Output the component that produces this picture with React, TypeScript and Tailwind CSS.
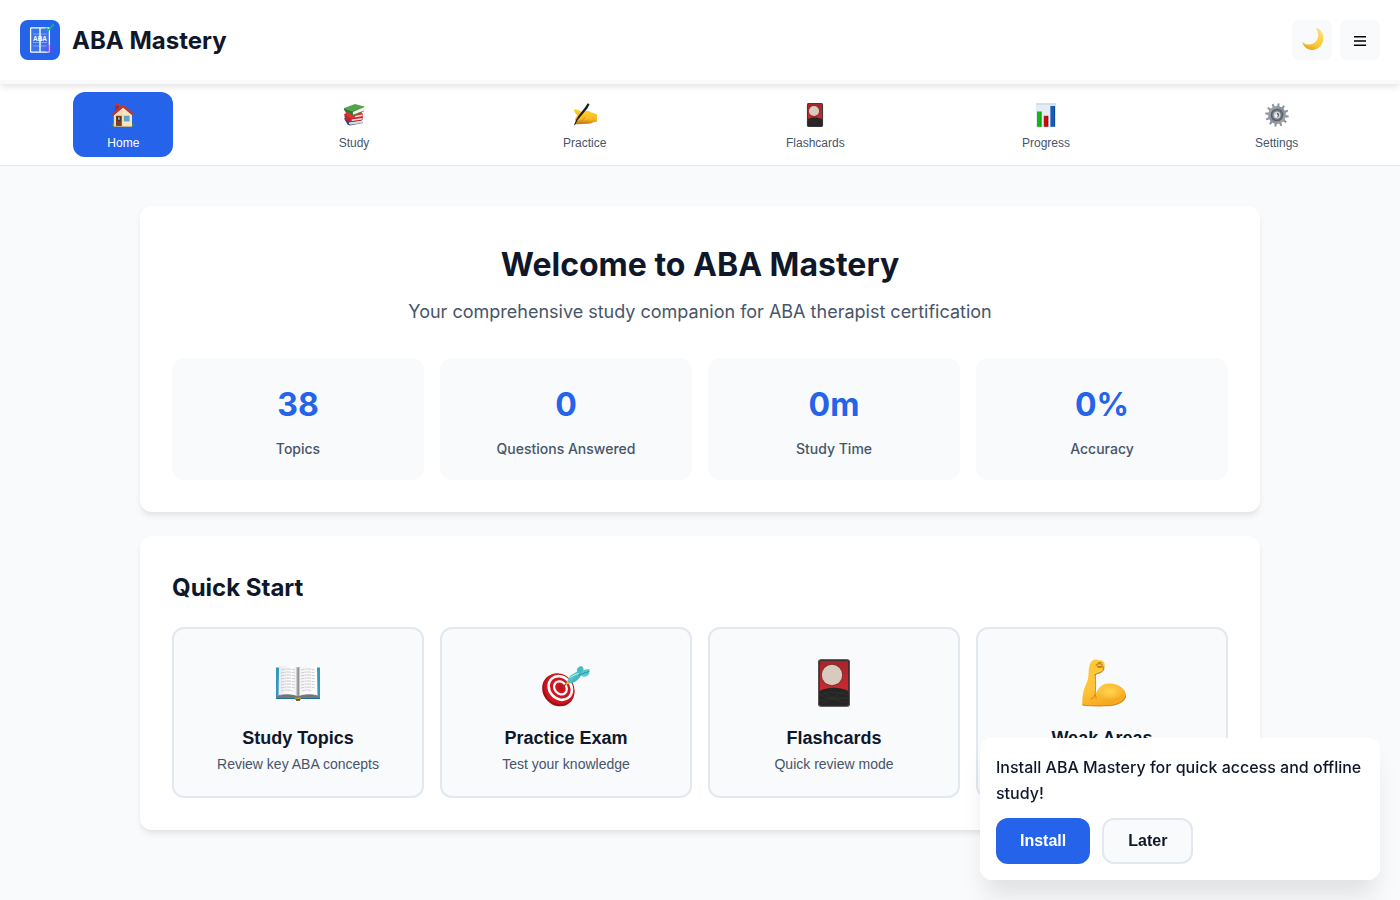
import type { ReactNode } from "react";

type IconProps = { className: string };

function Logo() {
  return (
    <svg viewBox="0 0 40 40" className="size-10 shrink-0 rounded-lg" aria-hidden="true">
      <rect width="40" height="40" fill="#2563eb" />
      <g stroke="#fff" fill="none">
        <rect x="10.6" y="7.8" width="18.8" height="24.4" rx="0.8" strokeWidth="1.3" fill="#fff" fillOpacity="0.1" />
        <path d="M20 8v24" strokeWidth="1.4" />
        <path d="M13 14h14M13 22.5h14M13 26h14" strokeWidth="0.7" opacity="0.5" />
      </g>
      <circle cx="29.5" cy="28.8" r="4" fill="#9333ea" opacity="0.4" />
      <text x="20" y="21.2" textAnchor="middle" fill="#fff" fontSize="6.4" fontWeight="700" fontFamily="Liberation Sans, sans-serif">
        ABA
      </text>
      <path d="M25.8 7.8l2.6 2.8 5.2-6.4" fill="none" stroke="#10b981" strokeWidth="1.6" />
    </svg>
  );
}

function Moon({ className }: IconProps) {
  return (
    <svg viewBox="0 0 24 24" className={className} aria-hidden="true">
      <defs>
        <linearGradient id="moon" x1="0.8" y1="0" x2="0.4" y2="1">
          <stop offset="0" stopColor="#ffe26a" />
          <stop offset="0.7" stopColor="#fbcb35" />
          <stop offset="1" stopColor="#e9a81c" />
        </linearGradient>
      </defs>
      <g transform="translate(1 -1)">
        <path d="M15.500 1C20 2.800 22.800 7 22.400 12C22 18.300 17 23 11 22.900C6.500 22.800 2.600 19.700 1.100 15.200C4 18 8.800 18.700 12.800 16.500C18.300 13.500 19.200 6 15.500 1Z" fill="url(#moon)" />
        <path d="M1.300 15.200C4 18 8.800 18.700 12.800 16.500C18.300 13.500 19.200 6 15.500 1" fill="none" stroke="#e8b84a" strokeWidth="0.500" />
      </g>
    </svg>
  );
}

function House({ className }: IconProps) {
  return (
    <svg viewBox="0 0 24 24" className={className} aria-hidden="true">
      <path d="M0.500 23C0.300 20.500 1.500 20 3 20.300L4 23.500ZM20 20.500C22 19.600 23.600 20.800 23.500 23L20 23.500Z" fill="#468b3c" />
      <rect x="4.200" y="1.500" width="3.600" height="7" fill="#a52c2c" />
      <rect x="3.800" y="0.600" width="4.600" height="1.800" rx="0.400" fill="#c23b35" />
      <path d="M2.800 11.500L12 3L21 11.500V23.500H2.800Z" fill="#f3ddb0" />
      <path d="M12 3L21 11.500V23.500H11.500Z" fill="#f8e6bf" />
      <path d="M12 1.200L22.800 10.600L21.600 12.200L12 4.200L2.300 12.400L1 11Z" fill="#c9352f" />
      <path d="M2.300 12.400L12 4.200L21.600 12.200" fill="none" stroke="#7e2420" strokeWidth="0.600" />
      <rect x="5" y="12.800" width="5.800" height="10.400" fill="#7b4023" />
      <rect x="6" y="13.800" width="3.800" height="4" fill="#4a2c24" />
      <rect x="7" y="14.300" width="1.800" height="2.500" fill="#7ab8d8" />
      <rect x="12.400" y="12.300" width="6.600" height="6.500" fill="#e9cf9a" />
      <rect x="13" y="12.900" width="5.400" height="5.300" fill="#56a5d8" />
      <path d="M15.700 13v5.200M13 15.500h5.400" stroke="#7e9eac" strokeWidth="0.500" />
      <rect x="2.800" y="22.900" width="18.200" height="0.900" fill="#bfae8a" />
    </svg>
  );
}

function Books({ className }: IconProps) {
  return (
    <svg viewBox="0 0 24 24" className={className} aria-hidden="true">
      <path d="M2 15.500L5 14.500L19 17L21 20L8 22.500L5.800 21.800Z" fill="#29428e" />
      <path d="M7 19.300L20 17.500L20.300 20L8.300 21.700C7 21.500 6.500 20 7 19.300Z" fill="#d9dbe0" />
      <path d="M2.200 11L6 9.500L20 12L21 14.500L20.500 17.300L8 19.200L3 16.500Z" fill="#bd2528" />
      <path d="M9.500 16.600L20.300 15V16.600L9.800 18.100Z" fill="#f0ebe8" />
      <path d="M3.200 8L19 8.500L21 11L20.500 14L8.500 15.500L4.600 12.800Z" fill="#dc3630" />
      <path d="M13 13L20.300 11.500V13L13.300 14.300Z" fill="#f5efeb" />
      <path d="M2.200 5L13 1L22.300 3.600L11 8.500Z" fill="#54a44c" />
      <path d="M2.200 5L11 8.500V12.200L3.400 8.500C2 7.700 1.700 6 2.200 5Z" fill="#267d31" />
      <path d="M11.300 8.600L22 4.200C21.400 5.500 21.500 6.800 22 7.800L11.600 11.900C10.500 11 10.600 9.500 11.300 8.600Z" fill="#f4f4ef" />
      <path d="M11 8.500L22.300 3.700M11.300 12.100L22 8" stroke="#267d31" strokeWidth="0.700" />
    </svg>
  );
}

function WritingHand({ className }: IconProps) {
  return (
    <svg viewBox="0 0 24 24" className={className} aria-hidden="true">
      <defs>
        <linearGradient id="hand" x1="0" y1="0" x2="0" y2="1">
          <stop offset="0" stopColor="#ffd12f" />
          <stop offset="0.650" stopColor="#f9ba22" />
          <stop offset="1" stopColor="#ce7c10" />
        </linearGradient>
      </defs>
      <path d="M1.200 6.700C2.500 5.500 5.500 7 7.500 8.200L11 8.700C13 7 16.500 7.800 18 9.200L24 11.200V18.800C20 18.500 19 20.700 15.500 20.700L4 21.200C1.500 21.300 1.800 19.400 3.200 18.700C1 17.200 2.500 14.300 4.500 12.500C3 11 0.500 8.400 1.200 6.700Z" fill="url(#hand)" />
      <path d="M4 19.300L9.500 17.600L11.700 14.500M4.500 20.700L14.500 18.700" fill="none" stroke="#b86f16" strokeWidth="0.600" strokeLinecap="round" />
      <path d="M14.700 0.300L16.500 1.200L14.300 5.600L7.400 13.800L4.600 17L2 22.300L1.100 22L3.300 16.500L5.700 12.600L12.200 4.300Z" fill="#171b20" />
    </svg>
  );
}

function FlowerCard({ className }: IconProps) {
  return (
    <svg viewBox="0 0 48 48" className={className} aria-hidden="true">
      <defs>
        <linearGradient id="card-red" x1="0" y1="0" x2="0" y2="1">
          <stop offset="0" stopColor="#a5262b" />
          <stop offset="1" stopColor="#d02a30" />
        </linearGradient>
        <clipPath id="card-face">
          <rect x="9.500" y="2" width="29" height="44.500" rx="1.500" />
        </clipPath>
      </defs>
      <rect x="8" y="0.200" width="32" height="47.600" rx="3.200" fill="#2b2a2b" />
      <rect x="8.500" y="0.700" width="31" height="46.600" rx="2.800" fill="none" stroke="#6b6563" strokeWidth="0.700" />
      <g clipPath="url(#card-face)">
        <rect x="9.500" y="2" width="29" height="33" fill="url(#card-red)" />
        <circle cx="22" cy="16" r="11" fill="#79302d" />
        <circle cx="22" cy="16" r="10.200" fill="#d8cbbd" />
        <path d="M9 32.500C16 27.600 31 27.600 39 32.500V47H9Z" fill="#252526" />
        <path d="M9 37Q20 30 39 36M9 42Q25 39 34 32M13 32Q26 45 39 43M9 35Q22 43 37 39M12 45Q24 36 39 40" fill="none" stroke="#383838" strokeWidth="0.600" />
      </g>
    </svg>
  );
}

function BarChart({ className }: IconProps) {
  return (
    <svg viewBox="0 0 24 24" className={className} aria-hidden="true">
      <rect x="2" y="0.200" width="20" height="23.600" fill="#d9e4ec" />
      <path d="M2 0.900h20" stroke="#c1ccd5" strokeWidth="0.600" />
      <path d="M2 2h14v20H2z" fill="#edf5f9" opacity="0.500" />
      <rect x="3" y="8.500" width="4.600" height="15.300" fill="#12b813" />
      <rect x="9.800" y="12.800" width="4.500" height="11" fill="#c40d15" />
      <rect x="16.400" y="3" width="4.600" height="20.800" fill="#135dbe" />
      <path d="M7.100 8.500v15.300M13.800 12.800v11M20.500 3v20.800" stroke="#000" strokeOpacity="0.200" />
    </svg>
  );
}

const GEAR_TEETH = [0, 30, 60, 90, 120, 150, 180, 210, 240, 270, 300, 330];

function Gear({ className }: IconProps) {
  return (
    <svg viewBox="0 0 24 24" className={className} aria-hidden="true">
      <defs>
        <linearGradient id="gear" x1="0" y1="0" x2="1" y2="1">
          <stop offset="0" stopColor="#a7afb5" />
          <stop offset="0.500" stopColor="#858c92" />
          <stop offset="1" stopColor="#abb1b6" />
        </linearGradient>
      </defs>
      {GEAR_TEETH.map((angle) => (
        <path key={angle} d="M10.600 4.500L11.200 0.200H12.800L13.400 4.500Z" fill="#8b9398" transform={`rotate(${angle + 8} 12 12)`} />
      ))}
      <circle cx="12" cy="12" r="8.900" fill="url(#gear)" />
      <circle cx="12" cy="12" r="6.300" fill="#596168" />
      <circle cx="12" cy="12" r="5" fill="#757d84" />
      <circle cx="12" cy="12" r="3.500" fill="#d1d5d7" />
      <path d="M12 10A2 2 0 0 1 12 14Z" fill="#4b5054" />
      <circle cx="11.500" cy="12.500" r="1.200" fill="#fff" />
    </svg>
  );
}

function OpenBook({ className }: IconProps) {
  return (
    <svg viewBox="0 0 48 48" className={className} aria-hidden="true">
      <defs>
        <linearGradient id="page-left">
          <stop offset="0" stopColor="#e9e9ef" />
          <stop offset="0.700" stopColor="#fff" />
          <stop offset="0.880" stopColor="#f0f0f3" />
          <stop offset="1" stopColor="#8d8d91" />
        </linearGradient>
        <linearGradient id="page-right">
          <stop offset="0" stopColor="#77777b" />
          <stop offset="0.120" stopColor="#f5f5f8" />
          <stop offset="1" stopColor="#fff" />
        </linearGradient>
      </defs>
      <path d="M2 8.500H46V40H27C26.500 42.400 21.500 42.400 21 40H2Z" fill="#3297bd" />
      <path d="M2 39.500H46" stroke="#196c91" />
      <path d="M4 36L44 36L45 38.500H26C25 40 23 40 22 38.500H3Z" fill="#777579" />
      <path d="M5 8C12 5.500 20 6.500 24 9V38C19 35.500 11 35 4.500 37Z" fill="url(#page-left)" />
      <path d="M43 8C36 5.500 28 6.500 24 9V38C29 35.500 37 35 43.500 37Z" fill="url(#page-right)" />
      <path d="M4.500 36.800C12 35 19 35.500 24 38C29 35.500 36 35 43.500 36.800" fill="none" stroke="#65666b" strokeWidth="0.800" />
      <path d="M20.500 38.500H27.500L26 41H22Z" fill="#b79728" />
      <path d="M22 40H26V41.800H22Z" fill="#5d641e" />
      <g fill="none" stroke="#b4b4bc" strokeWidth="0.700" strokeDasharray="3 0.600 2 0.500 4 0.700">
        <path d="M7 11q7-2 14 0M7 14q7-2 14 0M7 17q7-2 14 0M7 20q7-2 14 0M7 23q7-2 14 0M7 26q7-2 14 0M7 29q7-2 14 0M7 32q7-2 12 0" />
        <path d="M27 11q7-2 14 0M27 14q7-2 14 0M27 17q7-2 14 0M27 20q7-2 14 0M27 23q7-2 14 0M27 26q7-2 14 0M27 29q7-2 14 0M28 32q6-2 9 0" />
      </g>
    </svg>
  );
}

function Target({ className }: IconProps) {
  return (
    <svg viewBox="0 0 48 48" className={className} aria-hidden="true">
      <defs>
        <linearGradient id="dart" x1="0" y1="0" x2="1" y2="1">
          <stop offset="0" stopColor="#7ce0df" />
          <stop offset="1" stopColor="#259eab" />
        </linearGradient>
      </defs>
      <ellipse cx="16.300" cy="31" rx="15.200" ry="17.200" transform="rotate(-42 16.300 31)" fill="#9e0f16" />
      <ellipse cx="17.300" cy="29.800" rx="14.400" ry="16.200" transform="rotate(-42 17.300 29.800)" fill="#cf1620" />
      <g fill="none" transform="rotate(-42 18.300 29)">
        <ellipse cx="18.300" cy="29" rx="10.800" ry="12.600" stroke="#fff" strokeWidth="2.600" />
        <ellipse cx="18.500" cy="29" rx="5.800" ry="7" stroke="#fff" strokeWidth="2.200" />
        <ellipse cx="18.700" cy="29" rx="2.500" ry="3.200" fill="#c31020" />
      </g>
      <path d="M20 28.500L27 22.500" stroke="#843c25" strokeWidth="1.200" />
      <path d="M23.500 26L26 20L29.500 24Z" fill="#edb92e" />
      <path d="M26 20.500C27 16 34 13 37.500 12L39 16.500C36.500 21 32 24.500 28 24C26 23.500 25.300 22 26 20.500Z" fill="url(#dart)" />
      <path d="M36 15.500C33.500 11 35.500 7.500 39.500 7C42 8.500 42.400 11.500 39.500 15Z" fill="#47bbc4" />
      <path d="M38 16C39 11.500 43 9.500 48 10.300C46.500 12 47 13.500 47.500 14.500C45 18 41.500 19 38 16Z" fill="#57c9cc" />
      <path d="M36.500 16L47.500 12.300" stroke="#218c9b" strokeWidth="0.900" />
      <path d="M28.500 18.500C31 16.500 34 15.300 37 14.500" fill="none" stroke="#b5f2ee" strokeWidth="1" />
    </svg>
  );
}

function FlexedArm({ className }: IconProps) {
  return (
    <svg viewBox="0 0 48 48" className={className} aria-hidden="true">
      <defs>
        <linearGradient id="arm" x1="0" y1="0" x2="0.300" y2="1">
          <stop offset="0" stopColor="#ffc936" />
          <stop offset="0.650" stopColor="#ffc33a" />
          <stop offset="1" stopColor="#f5aa21" />
        </linearGradient>
        <radialGradient id="bicep">
          <stop offset="0" stopColor="#ffd552" />
          <stop offset="1" stopColor="#ffd552" stopOpacity="0" />
        </radialGradient>
      </defs>
      <path d="M4.300 44C4.300 36 5.500 30 9.500 22C11 17 10.300 11 11.400 7C12 4 14 1 17 0.500C19 0 20.500 1.200 21.500 1.300C24.500 1 27 3.500 26.500 5.500C27.300 6.500 26.700 8 26 9C25.500 12 22.500 14.500 19 14.300L17.300 16C17.700 23 17.500 30 17.200 36C20 30 23 25 30 24.600C40 23.700 48 30 48 36.500C48 43 39 47 28 47C19 47.500 10 46.700 5 46.300C4 46 4 45 4.300 44Z" fill="url(#arm)" />
      <ellipse cx="32" cy="33" rx="13" ry="8" fill="url(#bicep)" />
      <path d="M17.300 16C18 23 17.500 30 17.200 36C16 38.500 15 39 13 40M17.200 36C18 37 18 38 18 39" fill="none" stroke="#bd7711" strokeWidth="0.800" strokeLinecap="round" />
      <path d="M17 15.800L20 14.200C23.500 13.800 25.800 12 26 9M18 6C20 4.500 22.500 4.300 24 5.500C25.500 7 22 8.500 19 7M20 4L23 3.500M20 8.300L25.500 8" fill="none" stroke="#a56b10" strokeWidth="0.900" strokeLinecap="round" />
      <path d="M4.400 46C14 47.500 25 46.800 30 46.700C38 46.500 47.500 42.500 47.800 36.500" fill="none" stroke="#c4760c" strokeWidth="0.800" />
    </svg>
  );
}

const NAV: { label: string; icon: ReactNode; active?: boolean }[] = [
  { label: "Home", icon: <House className="size-6" />, active: true },
  { label: "Study", icon: <Books className="size-6" /> },
  { label: "Practice", icon: <WritingHand className="size-6" /> },
  { label: "Flashcards", icon: <FlowerCard className="size-6" /> },
  { label: "Progress", icon: <BarChart className="size-6" /> },
  { label: "Settings", icon: <Gear className="size-6" /> },
];

const STATS = [
  { value: "38", label: "Topics" },
  { value: "0", label: "Questions Answered" },
  { value: "0m", label: "Study Time" },
  { value: "0%", label: "Accuracy" },
];

const ACTIONS: { title: string; text?: string; icon: ReactNode }[] = [
  { title: "Study Topics", text: "Review key ABA concepts", icon: <OpenBook className="size-12" /> },
  { title: "Practice Exam", text: "Test your knowledge", icon: <Target className="size-12" /> },
  { title: "Flashcards", text: "Quick review mode", icon: <FlowerCard className="size-12" /> },
  { title: "Weak Areas", icon: <FlexedArm className="size-12" /> },
];

const CARD = "rounded-xl bg-white p-8 shadow-[0_4px_6px_-1px_rgba(0,0,0,0.1)]";

export default function App() {
  return (
    <div className="min-h-screen bg-[#f8fafc] font-['Inter',sans-serif] text-[#0f172a]">
      <header className="relative z-10 bg-white shadow-[0_4px_6px_-1px_rgba(0,0,0,0.1)]">
        <div className="flex items-center justify-between p-5">
          <div className="flex items-center gap-3">
            <Logo />
            <h1 className="text-2xl leading-[39px] font-bold">ABA Mastery</h1>
          </div>
          <div className="flex gap-2">
            <button type="button" aria-label="Toggle dark mode" className="flex size-10 items-center justify-center rounded-lg bg-[#f8fafc]">
              <Moon className="size-6" />
            </button>
            <button type="button" aria-label="Open menu" className="flex size-10 items-center justify-center rounded-lg bg-[#f8fafc]">
              <svg viewBox="0 0 12 12" className="size-3" aria-hidden="true">
                <path d="M0 2.700h12M0 7h12M0 11.300h12" stroke="#000" strokeWidth="1.500" />
              </svg>
            </button>
          </div>
        </div>
        <div className="h-1 bg-[#f8fafc]" />
      </header>

      <nav className="border-b border-[#e2e8f0] bg-white p-2 font-['Liberation_Sans',sans-serif]">
        <ul className="grid grid-cols-6 justify-items-center">
          {NAV.map((item) => (
            <li key={item.label}>
              <button
                type="button"
                className={
                  item.active
                    ? "flex w-[100px] flex-col items-center gap-1 rounded-xl bg-[#2563eb] pt-2 pb-1 text-white"
                    : "flex w-[100px] flex-col items-center gap-1 rounded-xl pt-2 pb-1 text-[#475569]"
                }
              >
                <span className="flex h-[30px] items-center">{item.icon}</span>
                <span className="text-xs leading-[19px]">{item.label}</span>
              </button>
            </li>
          ))}
        </ul>
      </nav>

      <main className="mx-auto flex max-w-[1200px] flex-col gap-6 p-10">
        <section className={CARD}>
          <h2 className="mb-1.5 text-center text-[32px] leading-[53px] font-bold">Welcome to ABA Mastery</h2>
          <p className="mb-8 text-center text-lg leading-[29px] text-[#475569]">
            Your comprehensive study companion for ABA therapist certification
          </p>
          <dl className="grid grid-cols-4 gap-4">
            {STATS.map((stat) => (
              <div key={stat.label} className="flex flex-col-reverse gap-1.5 rounded-xl bg-[#f8fafc] p-5 text-center">
                <dt className="text-sm leading-[23px] font-medium text-[#475569]">{stat.label}</dt>
                <dd className="text-[32px] leading-[53px] font-bold text-[#2563eb]">{stat.value}</dd>
              </div>
            ))}
          </dl>
        </section>

        <section className={CARD}>
          <h2 className="mb-5 text-2xl leading-[39px] font-bold">Quick Start</h2>
          <div className="grid grid-cols-4 gap-4 font-['Liberation_Sans',sans-serif]">
            {ACTIONS.map((action) => (
              <button
                key={action.title}
                type="button"
                className="flex flex-col items-center rounded-xl border-2 border-[#e2e8f0] bg-[#f8fafc] p-6"
              >
                <span className="mb-[14px] flex h-[60px] items-center">{action.icon}</span>
                <span className="mb-1.5 text-lg leading-[23px] font-bold">{action.title}</span>
                {action.text && <span className="text-sm leading-4 text-[#475569]">{action.text}</span>}
              </button>
            ))}
          </div>
        </section>
      </main>

      <aside className="fixed right-5 bottom-5 z-20 max-w-[400px] rounded-xl bg-white p-4 shadow-[0_20px_25px_-5px_rgba(0,0,0,0.1)]">
        <p className="mb-3 leading-[26px] font-medium">Install ABA Mastery for quick access and offline study!</p>
        <div className="flex gap-3 font-['Liberation_Sans',sans-serif] leading-[18px] font-bold">
          <button type="button" className="rounded-xl bg-[#2563eb] px-6 py-3 text-white">Install</button>
          <button type="button" className="rounded-xl border-2 border-[#e2e8f0] bg-[#f8fafc] px-6 py-3">Later</button>
        </div>
      </aside>
    </div>
  );
}
